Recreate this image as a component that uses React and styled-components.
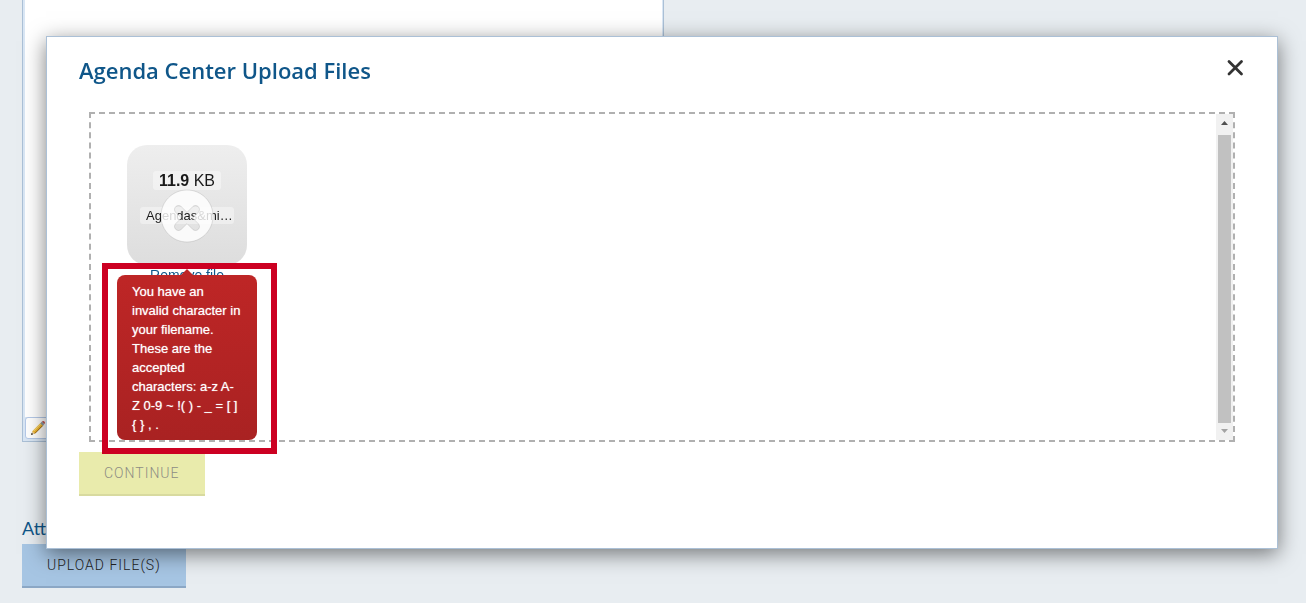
import React from 'react'
import styled, { createGlobalStyle } from 'styled-components'

const GlobalStyle = createGlobalStyle`
    * {
        box-sizing: border-box;
    }
    body {
        margin: 0;
        background: #e8edf1;
        font-family: "Liberation Sans", Arial, sans-serif;
        overflow: hidden;
    }
`

const Page = styled.div`
    display: flex;
    flex-direction: column;
    align-items: flex-start;
    padding-left: 22px;
    min-height: 100vh;
`

const Editor = styled.section`
    display: flex;
    flex-direction: column;
    width: 50%;
    max-width: 642px;
    border: 1px solid #abc0d6;
    border-top: 0;
    background: #d9e6f4;
    padding: 0 1px 2px 2px;
`

const EditorText = styled.textarea`
    display: block;
    width: 100%;
    height: 417px;
    border: 0;
    resize: none;
    background: white;
`

const EditorTabs = styled.div`
    display: flex;
`

const EditorTab = styled.button`
    display: flex;
    align-items: center;
    height: 22px;
    width: 60px;
    padding: 0 4px;
    border: 1px solid #b5c9e8;
    border-radius: 3px;
    background: white;
`

const Attachments = styled.div`
    display: flex;
    flex-direction: column;
    align-items: flex-start;
    padding-top: 72px;
`

const AttachmentsLabel = styled.span`
    height: 30px;
    font-family: Lato, sans-serif;
    font-size: 18px;
    line-height: 28px;
    color: #0f5689;
`

const Button = styled.button`
    height: 44px;
    padding: 0 25px;
    border: 0;
    border-bottom: 2px solid ${(props) => props.$edge};
    background: ${(props) => props.$fill};
    color: ${(props) => props.$ink};
    font-family: Roboto, sans-serif;
    font-size: 14px;
    font-weight: 300;
    letter-spacing: 1px;
    text-transform: uppercase;
`

const Overlay = styled.div`
    position: fixed;
    inset: 0;
    padding: 36px 28px 0 46px;
`

const Modal = styled.div`
    padding: 16px 32px 52px;
    border: 1px solid #abc0d6;
    background: white;
    box-shadow: 0 5px 20px rgba(0, 0, 0, 0.5);
`

const ModalHeader = styled.header`
    display: flex;
    justify-content: space-between;
    align-items: center;
    height: 34px;
`

const ModalTitle = styled.h1`
    margin: 0;
    font-family: "Open Sans", sans-serif;
    font-size: 22px;
    font-weight: 600;
    color: #0f5689;
`

const CloseButton = styled.button`
    display: flex;
    width: 18px;
    height: 34px;
    padding: 6px 0;
    border: 0;
    background: none;
`

const DropZone = styled.div`
    display: flex;
    justify-content: space-between;
    height: 330px;
    margin: 25px 10px 10px;
    border: 2px dashed #b0b0b0;
`

const Files = styled.div`
    display: flex;
    align-items: flex-start;
    padding: 31px 36px;
`

const Preview = styled.div`
    position: relative;
    width: 120px;
`

const Tile = styled.div`
    display: flex;
    flex-direction: column;
    align-items: center;
    gap: 17px;
    height: 120px;
    padding-top: 26px;
    border-radius: 20px;
    background: linear-gradient(to bottom, #eee, #ddd);
    color: #1a1a1a;
`

const FileSize = styled.div`
    padding: 0 6px;
    border-radius: 3px;
    background: rgba(255, 255, 255, 0.4);
    font-size: 16px;
    line-height: 19px;
`

const FileName = styled.div`
    width: 94px;
    padding: 0 6px;
    border-radius: 3px;
    background: rgba(255, 255, 255, 0.4);
    font-size: 13px;
    line-height: 17px;
    white-space: nowrap;
`

const ErrorMark = styled.svg`
    position: absolute;
    top: 44px;
    left: 33px;
`

const RemoveLink = styled.a`
    display: block;
    font-size: 14px;
    line-height: 20px;
    text-align: center;
    color: #0f5689;
    text-decoration: none;
`

const ErrorMessage = styled.div`
    position: absolute;
    top: 130px;
    left: -10px;
    width: 140px;
    padding: 7px 16px 6px 15px;
    border-radius: 8px;
    background: linear-gradient(to bottom, #be2626, #a92222);
    color: white;
    font-size: 13px;
    line-height: 19px;
    text-shadow: 0 0 1px rgba(255, 255, 255, 0.7);

    &::after {
        content: "";
        position: absolute;
        top: -6px;
        left: 64px;
        border-left: 6px solid transparent;
        border-right: 6px solid transparent;
        border-bottom: 6px solid #be2626;
    }
`

const Highlight = styled.div`
    position: absolute;
    top: 118px;
    left: -25px;
    width: 175px;
    height: 191px;
    border: 6px solid #cc0022;
`

const ScrollTrack = styled.div`
    display: flex;
    flex-direction: column;
    align-items: center;
    width: 17px;
    background: #f1f1f1;
`

const ScrollThumb = styled.div`
    flex: 1;
    width: 13px;
    background: #c1c1c1;
`

const Arrow = styled.svg`
    width: 17px;
    height: ${(props) => props.$height};
`

function Pencil() {
    return (
        <svg width="16" height="16" viewBox="0 0 16 16">
            <path d="M1.5 14.5 L2.5 11 L10.5 3 L13 5.5 L5 13.5 Z" fill="#eeb62f" />
            <path d="M3.5 11.2 L11 3.7" stroke="#fbe08a" strokeWidth="1" />
            <path d="M4.8 13.5 L12.8 5.5" stroke="#96600d" strokeWidth="1" />
            <path d="M10.3 3.2 L12 1.5 L14.5 4 L12.8 5.7 Z" fill="#8d98a3" />
            <path d="M12 1.5 Q13 0.5 14.4 1.6 Q15.5 3 14.5 4 Z" fill="#c0443f" />
            <path d="M1.5 14.5 L2.4 11.3 L4.7 13.6 Z" fill="#e8cc9c" />
            <path d="M1 15 L1.7 12.8 L3.2 14.3 Z" fill="#222" />
        </svg>
    )
}

export default function App() {
    return (
        <>
            <GlobalStyle />
            <Page>
                <Editor>
                    <EditorText aria-label="Content" />
                    <EditorTabs>
                        <EditorTab aria-label="Design"><Pencil /></EditorTab>
                    </EditorTabs>
                </Editor>
                <Attachments>
                    <AttachmentsLabel>Attachments</AttachmentsLabel>
                    <Button $fill="#a6c5e3" $edge="#8ba7c5" $ink="#222">Upload File(s)</Button>
                </Attachments>
            </Page>
            <Overlay>
                <Modal role="dialog" aria-labelledby="upload-title">
                    <ModalHeader>
                        <ModalTitle id="upload-title">Agenda Center Upload Files</ModalTitle>
                        <CloseButton aria-label="Close">
                            <svg width="18" height="18" viewBox="0 0 18 18">
                                <path d="M2 2.5 L14.5 15 M14.5 2.5 L2 15" stroke="#333" strokeWidth="2.8" strokeLinecap="round" />
                            </svg>
                        </CloseButton>
                    </ModalHeader>
                    <DropZone>
                        <Files>
                            <Preview>
                                <Tile>
                                    <FileSize><strong>11.9</strong> KB</FileSize>
                                    <FileName>Agendas&amp;mi…</FileName>
                                </Tile>
                                <ErrorMark width="54" height="54" viewBox="0 0 54 54">
                                    <path
                                        d="M32.6568542,29 L38.3106978,23.3461564 C39.8771021,21.7797521 39.8758057,19.2483887 38.3137085,17.6862915 C36.7547899,16.1273729 34.2176035,16.1255422 32.6538436,17.6893022 L27,23.3431458 L21.3461564,17.6893022 C19.7823965,16.1255422 17.2452101,16.1273729 15.6862915,17.6862915 C14.1241943,19.2483887 14.1228979,21.7797521 15.6893022,23.3461564 L21.3431458,29 L15.6893022,34.6538436 C14.1228979,36.2202479 14.1241943,38.7516113 15.6862915,40.3137085 C17.2452101,41.8726271 19.7823965,41.8744578 21.3461564,40.3106978 L27,34.6568542 L32.6538436,40.3106978 C34.2176035,41.8744578 36.7547899,41.8726271 38.3137085,40.3137085 C39.8758057,38.7516113 39.8771021,36.2202479 38.3106978,34.6538436 L32.6568542,29 Z M27,53 C41.3594035,53 53,41.3594035 53,27 C53,12.6405965 41.3594035,1 27,1 C12.6405965,1 1,12.6405965 1,27 C1,41.3594035 12.6405965,53 27,53 Z"
                                        fill="#fff"
                                        fillOpacity="0.82"
                                        fillRule="evenodd"
                                        stroke="#747474"
                                        strokeOpacity="0.2"
                                    />
                                </ErrorMark>
                                <RemoveLink href="#remove">Remove file</RemoveLink>
                                <ErrorMessage role="alert">
                                    You have an invalid character in your filename. These are the accepted characters: a-z A-Z 0-9 ~ !( ) - _ = [ ] {'{ }'} , .
                                </ErrorMessage>
                                <Highlight />
                            </Preview>
                        </Files>
                        <ScrollTrack>
                            <Arrow $height="21px" viewBox="0 0 17 21">
                                <path d="M5 11 L8.5 7 L12 11 Z" fill="#505050" />
                            </Arrow>
                            <ScrollThumb />
                            <Arrow $height="17px" viewBox="0 0 17 17">
                                <path d="M5 6 L12 6 L8.5 10 Z" fill="#a3a3a3" />
                            </Arrow>
                        </ScrollTrack>
                    </DropZone>
                    <Button disabled $fill="#e9ebac" $edge="#d8da9f" $ink="#8d8d84">Continue</Button>
                </Modal>
            </Overlay>
        </>
    )
}
